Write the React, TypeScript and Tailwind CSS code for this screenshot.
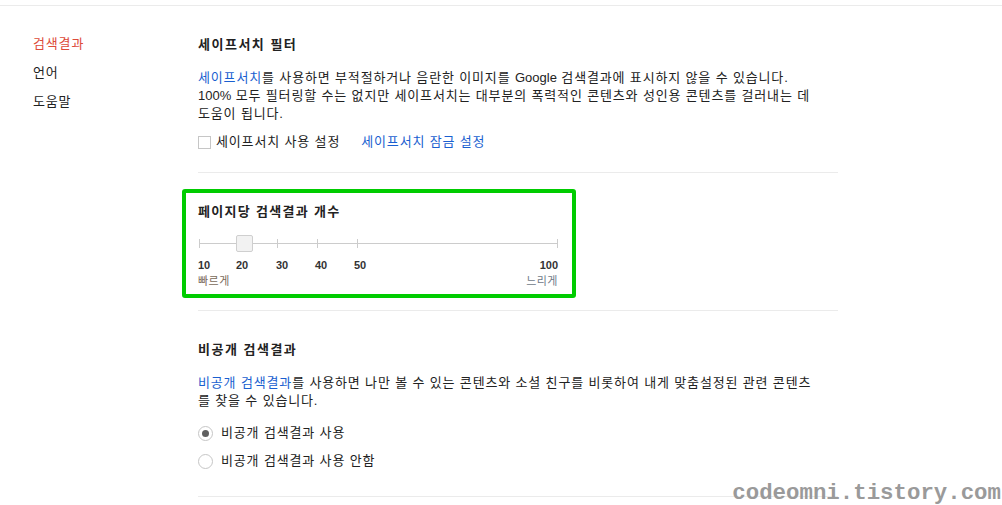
import React from "react";

const font = { fontFamily: '"Liberation Sans", "Noto Sans CJK KR", sans-serif' };

function Slider() {
  const ticks = [0, 78, 118, 158, 358];
  return (
    <div className="relative w-[360px] h-[20px] mt-[13px]">
      <div className="absolute left-[1px] top-[9px] w-[358px] h-px bg-[#cccccc]" />
      {ticks.map((t) => (
        <div key={t} className="absolute top-[5px] w-px h-[9px] bg-[#cccccc]" style={{ left: t + 1 }} />
      ))}
      <div className="absolute left-[38px] top-[1px] w-[17px] h-[17px] rounded-[2px] border border-[#cfcfcf] bg-[#f2f2f2]" />
    </div>
  );
}

export default function App() {
  const labels = [
    { v: "10", x: 0 },
    { v: "20", x: 38 },
    { v: "30", x: 78 },
    { v: "40", x: 117 },
    { v: "50", x: 156 },
  ];
  return (
    <div className="relative w-[1002px] h-[505px] bg-white overflow-hidden text-[#222222] tracking-[0.85px]" style={font}>
      <div className="h-[5px]" />
      <div className="h-px bg-[#ebebeb]" />
      <div className="flex">
        <nav className="w-[198px] pl-[33px] pt-[29px] flex flex-col text-[13px] leading-[18px]">
          <div className="text-[#dd4b39]">검색결과</div>
          <div className="mt-[11px]">언어</div>
          <div className="mt-[11px]">도움말</div>
        </nav>
        <main className="w-[640px]">
          {/* Section 1 */}
          <section className="pt-[30px] pb-[21px] border-b border-[#ebebeb]">
            <h2 className="text-[13px] font-bold leading-[18px] tracking-[1.5px]">세이프서치 필터</h2>
            <p className="mt-[15px] text-[13px] leading-[18px] w-[616px]">
              <span className="text-[#1a5fd0]">세이프서치</span>를 사용하면 부적절하거나 음란한 이미지를 <span className="tracking-normal">Google</span> 검색결과에 표시하지 않을 수 있습니다.
              <br />
              <span className="tracking-normal">100%</span> 모두 필터링할 수는 없지만 세이프서치는 대부분의 폭력적인 콘텐츠와 성인용 콘텐츠를 걸러내는 데<br />도움이 됩니다.
            </p>
            <div className="mt-[10px] flex items-center text-[13px] leading-[18px]">
              <span className="w-[13px] h-[13px] border border-[#c6c6c6] bg-white" />
              <span className="ml-[5px]">세이프서치 사용 설정</span>
              <span className="ml-[21px] text-[#1a5fd0]">세이프서치 잠금 설정</span>
            </div>
          </section>

          {/* Section 2 */}
          <div className="pt-[16px] pb-[12px] border-b border-[#ebebeb]">
            <div className="ml-[-16px] w-[394px] border-[4px] border-[#00cc00] rounded-[3px] pl-[12px] pt-[10px] pb-[6px]">
              <h2 className="text-[13px] font-bold leading-[18px] tracking-[1.3px]">페이지당 검색결과 개수</h2>
              <Slider />
              <div className="relative w-[360px] h-[14px] mt-[4px] text-[11px] font-bold leading-[14px] text-[#333333] tracking-normal">
                {labels.map((l) => (
                  <span key={l.v} className="absolute top-0" style={{ left: l.x }}>
                    {l.v}
                  </span>
                ))}
                <span className="absolute top-0 right-0">100</span>
              </div>
              <div className="w-[360px] flex justify-between text-[11px] leading-[14px] text-[#7a6a5a] mt-[2px] tracking-[0.5px]">
                <span>빠르게</span>
                <span className="text-[#6f7a88]">느리게</span>
              </div>
            </div>
          </div>

          {/* Section 3 */}
          <section className="pt-[30px] pb-[26px] border-b border-[#ebebeb]">
            <h2 className="text-[13px] font-bold leading-[18px] tracking-[1.5px]">비공개 검색결과</h2>
            <p className="mt-[15px] text-[13px] leading-[18px] w-[616px]">
              <span className="text-[#1a5fd0]">비공개 검색결과</span>를 사용하면 나만 볼 수 있는 콘텐츠와 소셜 친구를 비롯하여 내게 맞춤설정된 관련 콘텐츠<br />를 찾을 수 있습니다.
            </p>
            <div className="mt-[14px] flex flex-col gap-[10px] text-[13px] leading-[18px]">
              <div className="flex items-center">
                <span className="w-[15px] h-[15px] rounded-full border border-[#c6c6c6] flex items-center justify-center">
                  <span className="w-[7px] h-[7px] rounded-full bg-[#5f5f5f]" />
                </span>
                <span className="ml-[8px]">비공개 검색결과 사용</span>
              </div>
              <div className="flex items-center">
                <span className="w-[15px] h-[15px] rounded-full border border-[#c6c6c6]" />
                <span className="ml-[8px]">비공개 검색결과 사용 안함</span>
              </div>
            </div>
          </section>
        </main>
      </div>
      <div
        className="absolute right-[1px] bottom-[1px] text-[22.4px] font-bold leading-none text-[#9a9a9a] tracking-normal"
        style={{ fontFamily: '"Liberation Mono", "DejaVu Sans Mono", monospace' }}
      >
        codeomni.tistory.com
      </div>
    </div>
  );
}
